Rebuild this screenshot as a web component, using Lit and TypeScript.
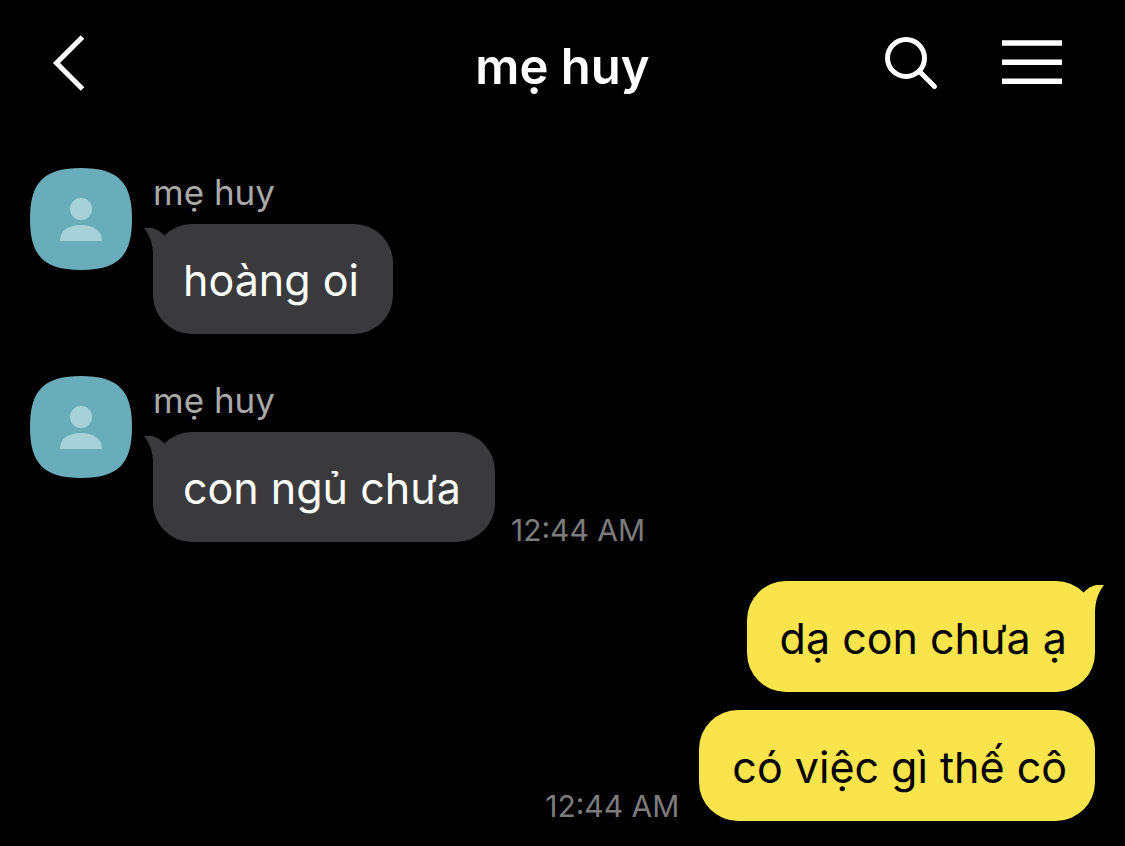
import { LitElement, html, css, svg, nothing } from "lit";
import { customElement, property } from "lit/decorators.js";

interface Message {
  text: string;
  mine?: boolean;
  sender?: string;
  time?: string;
  tail?: boolean;
}

const MESSAGES: Message[] = [
  { sender: "mẹ huy", text: "hoàng oi", tail: true },
  { sender: "mẹ huy", text: "con ngủ chưa", tail: true, time: "12:44 AM" },
  { mine: true, text: "dạ con chưa ạ", tail: true },
  { mine: true, text: "có việc gì thế cô", time: "12:44 AM" },
];

@customElement("chat-header")
export class ChatHeader extends LitElement {
  @property() heading = "";

  static styles = css`
    :host {
      display: block;
    }
    .bar {
      display: grid;
      grid-template-columns: 1fr auto 1fr;
      align-items: center;
      padding: 31px 50px 33px;
    }
    .title {
      margin: 0;
      padding-top: 8px;
      font-size: 49px;
      line-height: 56px;
      font-weight: 600;
      color: #fff;
    }
    .actions {
      display: flex;
      justify-content: flex-end;
      gap: 60px;
      padding-right: 13px;
    }
    .icon-button {
      display: block;
      padding: 0;
      border: 0;
      background: none;
      color: #fff;
      cursor: pointer;
      justify-self: start;
    }
    .icon {
      display: block;
      fill: none;
      stroke: currentColor;
    }
  `;

  render() {
    return html`
      <header class="bar">
        <button class="icon-button" aria-label="Back">
          <svg class="icon" width="40" height="64" viewBox="0 0 40 64" stroke-width="5">
            <path d="M32.5 6 L6.5 32 L32.5 58" />
          </svg>
        </button>
        <h1 class="title">${this.heading}</h1>
        <div class="actions">
          <button class="icon-button" aria-label="Search">
            <svg class="icon" width="60" height="64" viewBox="0 0 60 64" stroke-width="5">
              <circle cx="24" cy="27" r="18.5" />
              <path d="M37.5 40.5 L52.5 55.5" stroke-linecap="round" />
            </svg>
          </button>
          <button class="icon-button" aria-label="Menu">
            <svg class="icon" width="60" height="64" viewBox="0 0 60 64" stroke-width="5.6">
              <path d="M0 12 H60 M0 31.2 H60 M0 50.2 H60" />
            </svg>
          </button>
        </div>
      </header>
    `;
  }
}

@customElement("chat-message")
export class ChatMessage extends LitElement {
  @property({ attribute: false }) message!: Message;

  static styles = css`
    :host {
      display: block;
    }
    .row {
      display: flex;
      align-items: flex-start;
      gap: 21px;
    }
    .mine {
      justify-content: flex-end;
    }
    .avatar {
      flex: none;
      display: block;
    }
    .sender {
      font-size: 35px;
      line-height: 48px;
      padding-bottom: 8px;
      color: #a9a9a9;
    }
    .line {
      display: flex;
      align-items: flex-end;
      gap: 16px;
    }
    .mine .line {
      flex-direction: row-reverse;
    }
    .bubble {
      position: relative;
      padding: 30px 34px 28px 30px;
      border-radius: 39px;
      background: #3a3a3c;
      color: #fff;
      font-size: 43px;
      line-height: 52px;
    }
    .mine .bubble {
      padding: 31px 28px 28px 33px;
      background: #f9e44c;
      color: #000;
    }
    .tail {
      position: absolute;
      top: 4px;
      left: -9px;
      fill: #3a3a3c;
    }
    .mine .tail {
      left: auto;
      right: -9px;
      fill: #f9e44c;
    }
    .time {
      flex: none;
      font-size: 30px;
      line-height: 24px;
      color: #7c7c7c;
    }
    .mine .time {
      padding: 0 4px 3px;
    }
  `;

  private renderAvatar() {
    return html`
      <svg class="avatar" width="102" height="102" viewBox="0 0 102 102" aria-hidden="true">
        <path
          fill="#69adba"
          d="M51 0 C88 0 102 14 102 51 C102 88 88 102 51 102 C14 102 0 88 0 51 C0 14 14 0 51 0 Z"
        />
        <circle cx="51" cy="41" r="11" fill="#a6d1d8" />
        <path fill="#a6d1d8" d="M30 73 C30 62 39 57 51 57 C63 57 72 62 72 73 Z" />
      </svg>
    `;
  }

  private renderTail(mine?: boolean) {
    return html`
      <svg class="tail" width="24" height="36" viewBox="0 0 24 36" aria-hidden="true">
        ${mine
          ? svg`<path d="M24 0 C14 -1 9 2 3 8 L3 36 L15 36 L15 28 C15 16 18 8 24 0 Z" />`
          : svg`<path d="M0 0 C10 -1 15 2 21 8 L21 36 L9 36 L9 28 C9 16 6 8 0 0 Z" />`}
      </svg>
    `;
  }

  render() {
    const { text, mine, sender, time, tail } = this.message;
    return html`
      <div class="row ${mine ? "mine" : ""}">
        ${sender ? this.renderAvatar() : nothing}
        <div class="body">
          ${sender ? html`<div class="sender">${sender}</div>` : nothing}
          <div class="line">
            <div class="bubble">${tail ? this.renderTail(mine) : nothing}${text}</div>
            ${time ? html`<time class="time">${time}</time>` : nothing}
          </div>
        </div>
      </div>
    `;
  }
}

@customElement("app-root")
export class AppRoot extends LitElement {
  static styles = css`
    :host {
      display: block;
      box-sizing: border-box;
      min-height: 100vh;
      background: #000;
      font-family: Inter, "Noto Sans", sans-serif;
    }
    .thread {
      display: flex;
      flex-direction: column;
      padding: 40px 30px 25px;
    }
    .item + .item {
      margin-top: 42px;
    }
    .item + .reply {
      margin-top: 39px;
    }
    .reply + .reply {
      margin-top: 18px;
    }
  `;

  render() {
    return html`
      <chat-header heading="mẹ huy"></chat-header>
      <main class="thread">
        ${MESSAGES.map(
          (m) => html`<chat-message class="item ${m.mine ? "reply" : ""}" .message=${m}></chat-message>`
        )}
      </main>
    `;
  }
}
